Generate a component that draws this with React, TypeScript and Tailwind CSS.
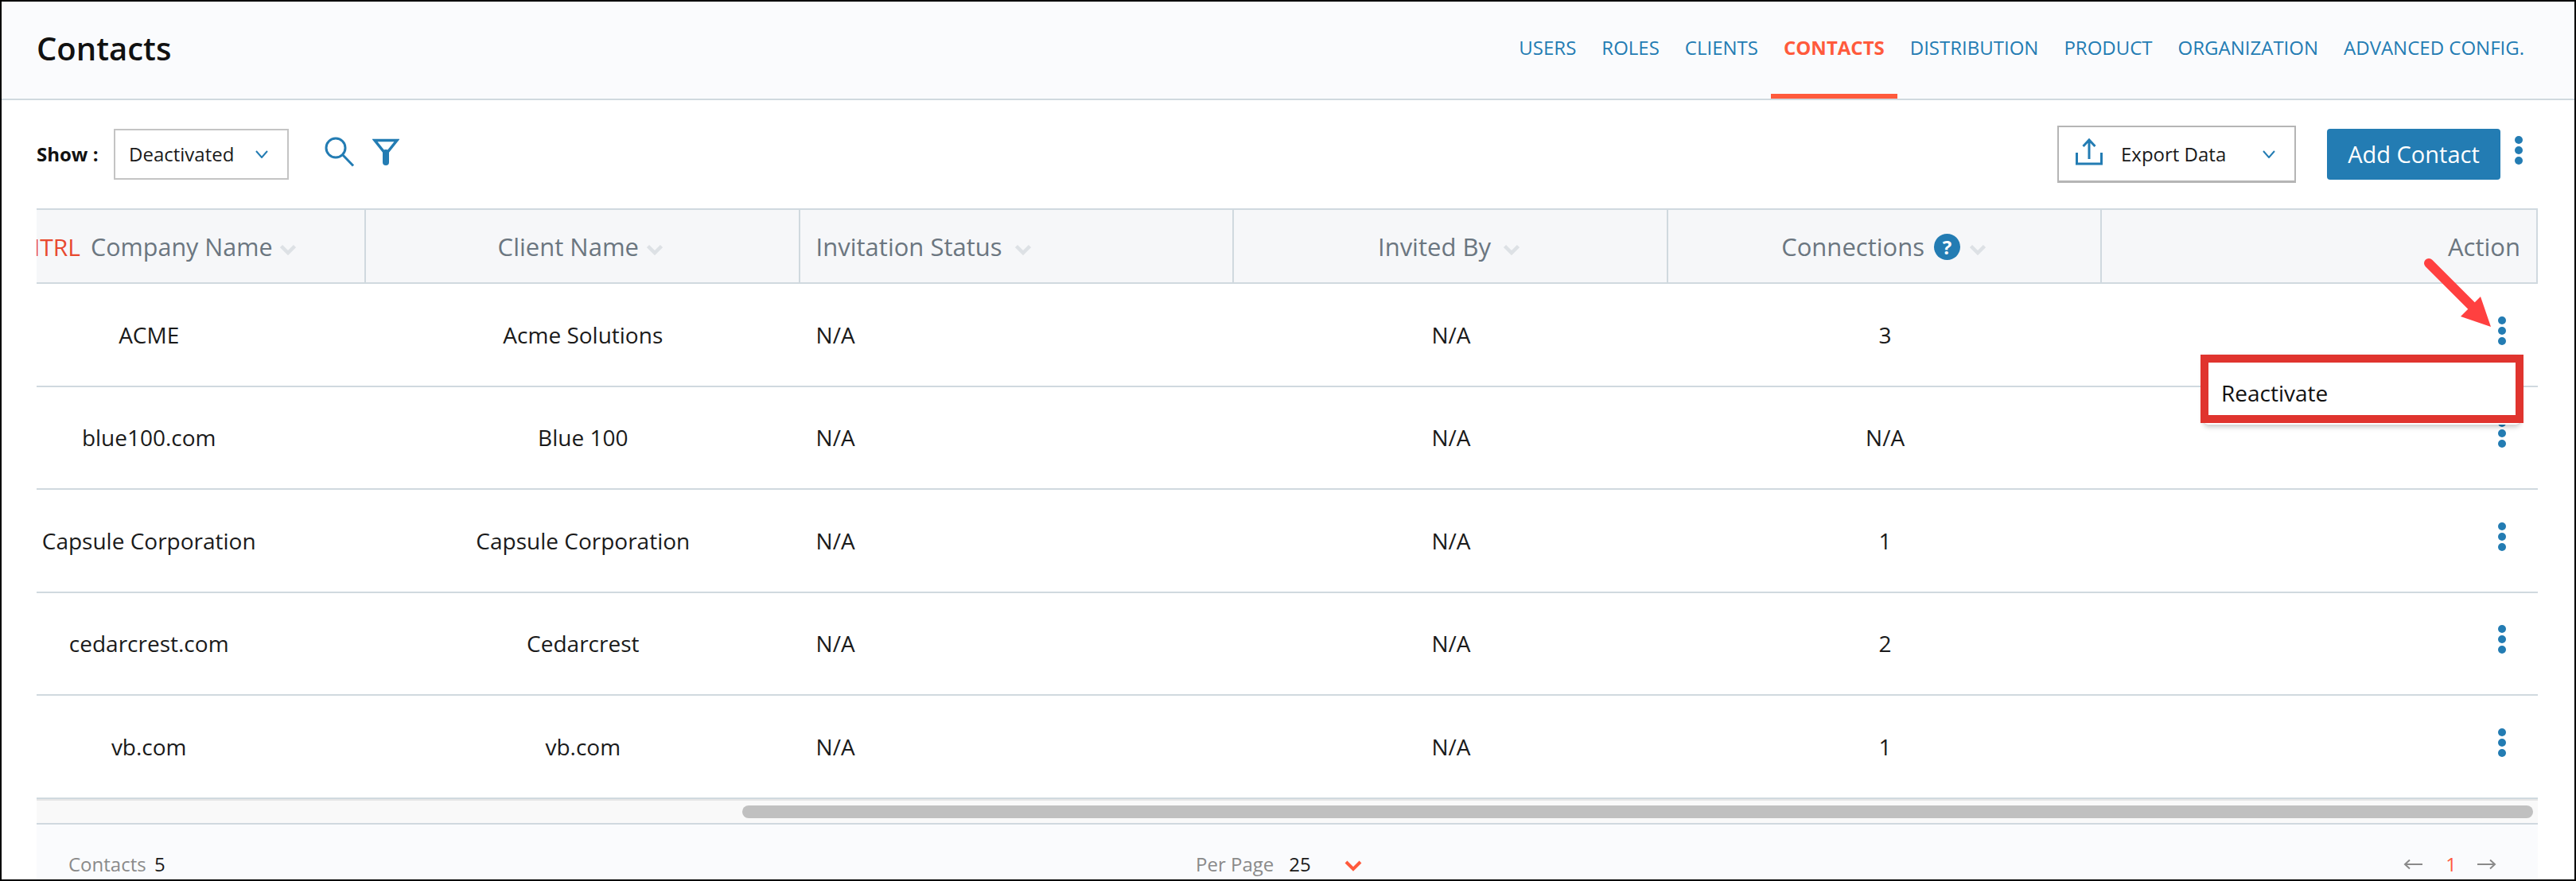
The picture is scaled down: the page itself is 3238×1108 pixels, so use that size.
import React from 'react'

const navItems = ['USERS', 'ROLES', 'CLIENTS', 'CONTACTS', 'DISTRIBUTION', 'PRODUCT', 'ORGANIZATION', 'ADVANCED CONFIG.']

const rows = [
  { company: 'ACME', client: 'Acme Solutions', connections: '3' },
  { company: 'blue100.com', client: 'Blue 100', connections: 'N/A' },
  { company: 'Capsule Corporation', client: 'Capsule Corporation', connections: '1' },
  { company: 'cedarcrest.com', client: 'Cedarcrest', connections: '2' },
  { company: 'vb.com', client: 'vb.com', connections: '1' },
]

function Kebab() {
  return (
    <div className="flex flex-col gap-[3px]">
      <span className="size-[10px] rounded-full bg-[#237cb3]" />
      <span className="size-[10px] rounded-full bg-[#237cb3]" />
      <span className="size-[10px] rounded-full bg-[#237cb3]" />
    </div>
  )
}

function SortChevron() {
  return (
    <svg width="20" height="14" viewBox="0 0 20 14" fill="none" className="shrink-0 mt-[7px]">
      <path d="M1.5 2.5 L10 11 L18.5 2.5" stroke="#dde1e5" strokeWidth="4.5" />
    </svg>
  )
}

function SmallChevron() {
  return (
    <svg width="16" height="10" viewBox="0 0 16 10" fill="none">
      <path d="M1 1 L8 9 L15 1" stroke="#237cb3" strokeWidth="2" />
    </svg>
  )
}

function HeaderCell({ children, className }: { children: React.ReactNode; className: string }) {
  return (
    <div className={`h-full flex items-center pt-[2px] text-[31px] font-medium text-[#6b7680] border-r-2 border-[#d0d9df] ${className}`}>
      {children}
    </div>
  )
}

export default function App() {
  return (
    <div className="relative w-[3238px] h-[1108px] border-2 border-black bg-white flex flex-col overflow-hidden font-['Open_Sans',sans-serif] text-[#1a1a1a]">
      <header className="h-[124px] shrink-0 flex justify-between bg-[#fafbfd] border-b-2 border-[#d0d9df] pl-[44px] pr-[47px]">
        <h1 className="self-center mb-[4px] text-[40px] font-semibold text-[#111]">Contacts</h1>
        <nav className="flex">
          {navItems.map((item) =>
            item === 'CONTACTS' ? (
              <span key={item} className="flex items-center px-4 text-[24px] font-bold text-[#ff5a3c] border-b-[6px] border-[#ff5a3c]">
                {item}
              </span>
            ) : (
              <span key={item} className="flex items-center px-4 text-[24px] text-[#237cb3] border-b-[6px] border-transparent">
                {item}
              </span>
            ),
          )}
        </nav>
      </header>

      <div className="flex-1 flex flex-col pl-[44px] pr-[46px] min-h-0">
        <div className="h-[136px] shrink-0 flex items-center">
          <span className="text-[24px] font-bold text-[#111] w-[97px]">Show :</span>
          <div className="w-[220px] h-[64px] border-2 border-[#c4c4c4] flex items-center justify-between pl-[17px] pr-[24px] text-[24px]">
            Deactivated
            <SmallChevron />
          </div>
          <svg width="38" height="38" viewBox="0 0 38 38" fill="none" className="ml-[45px] mb-[6px]">
            <circle cx="14" cy="14" r="12" stroke="#237cb3" strokeWidth="3" />
            <path d="M22.5 22.5 L36 36.5" stroke="#237cb3" strokeWidth="3" />
          </svg>
          <svg width="34" height="34" viewBox="0 0 34 34" fill="none" className="ml-[22px] mb-[6px]">
            <path d="M3 2.5 H31 L17 20 Z" stroke="#237cb3" strokeWidth="3.5" />
            <path d="M17 18 V30" stroke="#237cb3" strokeWidth="8" strokeLinecap="round" />
          </svg>

          <div className="ml-auto w-[300px] h-[72px] mr-[39px] border-2 border-b-[3px] border-[#b5b5b5] flex items-center pl-[20px] pr-[24px] text-[24px]">
            <svg width="36" height="36" viewBox="0 0 36 36" fill="none" className="shrink-0 mb-[6px]">
              <path d="M2.5 19 V33 H33.5 V19" stroke="#237cb3" strokeWidth="3" />
              <path d="M18 3 V27 M10.5 11 L18 3 L25.5 11" stroke="#237cb3" strokeWidth="3" />
            </svg>
            <span className="ml-[22px]">Export Data</span>
            <span className="ml-auto">
              <SmallChevron />
            </span>
          </div>
          <button className="w-[218px] h-[64px] rounded-[4px] bg-[#237cb3] text-white text-[29px] font-medium">Add Contact</button>
          <div className="ml-[18px] mr-[19px] mb-[10px]">
            <Kebab />
          </div>
        </div>

        <div className="w-[3144px] overflow-hidden">
          <div className="-ml-[131.6px] w-[3275.6px]">
            <div className="h-[95px] flex bg-[#f6f7f9] border-y-2 border-[#d0d9df]">
              <HeaderCell className="w-[545.6px] justify-center pl-[8px] gap-[9px]">
                <span className="text-[#e8492f] text-[30px] mr-[4px]">CNTRL</span>
                <span className="text-[30.5px]">Company Name</span>
                <SortChevron />
              </HeaderCell>
              <HeaderCell className="w-[545.6px] justify-center pr-[5px] gap-[10px]">
                Client Name
                <SortChevron />
              </HeaderCell>
              <HeaderCell className="w-[545.6px] pl-[20px] gap-[16px]">
                Invitation Status
                <SortChevron />
              </HeaderCell>
              <HeaderCell className="w-[545.6px] justify-center pr-[4px] gap-[16px]">
                Invited By
                <SortChevron />
              </HeaderCell>
              <HeaderCell className="w-[545.6px] justify-center pr-[2px] gap-[12px]">
                Connections
                <span className="size-[33px] rounded-full bg-[#237cb3] text-white text-[24px] font-bold flex items-center justify-center">?</span>
                <SortChevron />
              </HeaderCell>
              <HeaderCell className="flex-1 justify-end pr-[20px]">Action</HeaderCell>
            </div>
            {rows.map((row, i) => (
              <div key={row.company} className={`flex items-center text-[28px] ${i < 4 ? 'h-[129.5px] border-b-2 border-[#d0d9df]' : 'h-[128px]'}`}>
                <div className="w-[545.6px] text-center">{row.company}</div>
                <div className="w-[545.6px] text-center">{row.client}</div>
                <div className="w-[545.6px] pl-[20px]">N/A</div>
                <div className="w-[545.6px] text-center">N/A</div>
                <div className="w-[545.6px] text-center">{row.connections}</div>
                <div className="relative flex-1 self-stretch flex items-center justify-end pr-[40px]">
                  <div className="mb-[10px]">
                    <Kebab />
                  </div>
                  {i === 0 && (
                    <div className="absolute z-10 top-[89px] right-[22px] w-[398px] h-[88px] rounded-[6px] bg-white shadow-[0_3px_6px_rgba(0,0,0,0.22)]">
                      <div className="absolute -left-[4px] -right-[4px] top-0 bottom-[2px] border-[10px] border-[#e0342e] bg-white flex items-center pl-[16px] pt-[10px] text-[28px] text-[#111]">
                        Reactivate
                      </div>
                    </div>
                  )}
                </div>
              </div>
            ))}
          </div>
        </div>

        <div className="shrink-0 h-[32px] bg-[#f9f9f9] border-t-2 border-[#d0d9df]">
          <div className="h-[2px] bg-[#e6e6e6]" />
          <div className="pt-[6px] pl-[887px] pr-[6px]">
            <div className="h-4 rounded-full bg-[#c0c0c0]" />
          </div>
        </div>
        <div className="flex-1 flex items-center pt-[30px] bg-[#fafbfd] border-t-2 border-[#d0d9df] text-[24px] text-[#8a8a8a]">
          <div className="w-[1457px] pl-[40px]">
            Contacts <span className="ml-[4px] text-[#1a1a1a]">5</span>
          </div>
          <span>Per Page</span>
          <span className="ml-[19px] text-[#1a1a1a]">25</span>
          <svg width="22" height="14" viewBox="0 0 22 14" fill="none" className="ml-[42px] mt-[5px]">
            <path d="M2 2 L11 11 L20 2" stroke="#ff5a3c" strokeWidth="4" />
          </svg>
          <div className="ml-auto mr-[52px] flex items-center">
            <svg width="24" height="14" viewBox="0 0 24 14" fill="none">
              <path d="M24 7 H2 M8 1.5 L2 7 L8 12.5" stroke="#8a8a8a" strokeWidth="2" />
            </svg>
            <span className="ml-[29px] mr-[26px] text-[#ff5a3c]">1</span>
            <svg width="24" height="14" viewBox="0 0 24 14" fill="none">
              <path d="M0 7 H22 M16 1.5 L22 7 L16 12.5" stroke="#8a8a8a" strokeWidth="2" />
            </svg>
          </div>
        </div>
      </div>

      <svg width="100" height="100" viewBox="0 0 100 100" fill="none" className="absolute left-[3041px] top-[319px]">
        <path d="M10 10 L70 70" stroke="#ff4040" strokeWidth="12" strokeLinecap="round" />
        <path d="M75 52 L88 90 L50 77 Z" fill="#ff4040" />
      </svg>
    </div>
  )
}
